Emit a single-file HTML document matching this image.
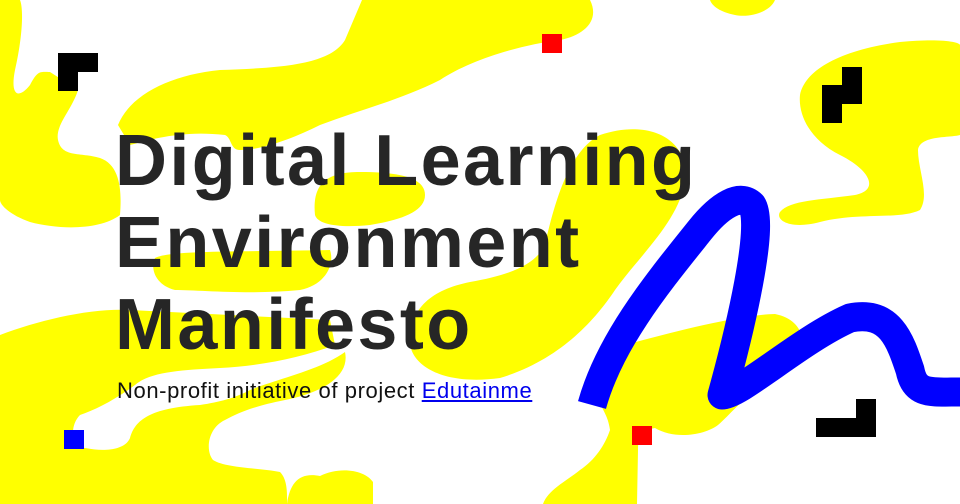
<!DOCTYPE html>
<html><head><style>
html,body{margin:0;padding:0;}
body{width:960px;height:504px;overflow:hidden;position:relative;background:#fff;font-family:"Liberation Sans",sans-serif;}
svg{position:absolute;left:0;top:0;}
h1{position:absolute;left:115px;top:120px;margin:0;font-size:72px;line-height:82px;font-weight:bold;color:#262626;letter-spacing:2.4px;}
p{position:absolute;left:117px;top:378px;margin:0;font-size:22px;color:#111;letter-spacing:0.6px;}
a{color:#0000ee;}
</style></head><body>
<svg width="960" height="504" viewBox="0 0 960 504">
<g fill="#ffff00">
<path d="M0 0 L20 0 C24 10 22 40 15 70 C10 95 18 100 30 85 C38 70 40 72 50 72 L78 90 C72 110 55 125 58 140 C62 158 80 152 100 158 C120 165 122 190 120 215 C100 230 60 230 30 222 C10 215 0 205 0 200 Z"/>
<path d="M118 125 C130 95 170 75 220 70 C280 68 330 65 345 40 L362 0 L590 0 C600 20 585 35 560 40 C520 45 470 60 440 80 C400 100 360 110 320 125 C290 140 260 150 240 150 C230 150 232 138 225 135 C180 130 150 140 130 145 Z"/>
<path d="M710 0 L775 0 C770 12 750 18 735 15 C720 12 712 6 710 0 Z"/>
<path d="M800 95 C805 70 840 50 900 42 C940 38 960 42 960 45 L960 100 C945 102 925 95 925 92 C935 85 960 80 960 80 L960 135 C950 138 920 135 918 150 C918 170 930 195 920 210 C900 220 860 212 820 222 C790 230 775 220 780 212 C790 200 820 200 855 195 C880 190 870 170 840 155 C810 140 798 115 800 95 Z"/>
<path d="M600 135 C650 118 690 140 685 180 C680 220 640 255 615 290 C595 320 560 360 500 378 C450 385 415 370 410 345 C408 310 430 290 470 282 C510 275 535 265 545 245 C555 200 570 150 600 135 Z"/>
<path d="M315 215 C312 185 325 172 360 172 C400 172 425 178 425 195 C425 212 400 220 370 225 C340 228 318 225 315 215 Z"/>
<path d="M155 258 C170 250 240 252 330 250 C335 265 325 285 300 290 C250 295 200 290 175 290 C155 285 150 268 155 258 Z"/>
<path d="M0 335 C40 320 90 308 130 310 L330 320 L335 345 C300 358 260 366 220 368 C180 370 150 372 135 385 C115 400 95 410 80 415 C70 425 70 445 85 448 C105 452 125 450 130 438 C135 420 150 408 200 405 C220 402 235 398 250 390 C280 378 320 370 345 352 C350 375 325 392 285 400 C255 406 240 412 225 420 C208 428 205 450 213 460 C225 468 260 468 280 472 C288 480 287 495 287 504 L0 504 Z"/>
<path d="M287 504 C290 482 300 472 320 476 C340 466 365 470 373 482 L373 504 Z"/>
<path d="M600 402 C595 370 605 350 625 345 C680 330 740 315 775 314 C795 318 805 332 800 345 C795 365 780 380 760 390 C740 400 730 415 718 425 C705 435 675 440 655 428 C640 430 638 440 638 450 L637 504 L543 504 C548 490 565 482 580 470 C595 460 605 445 610 430 C608 415 602 410 600 402 Z"/>
</g>
<path d="M592 405 C610 340 660 280 700 230 C720 205 740 193 752 205 C765 225 740 330 722 395 C740 395 800 340 850 318 C890 310 900 340 910 370 C915 395 930 392 960 392" fill="none" stroke="#0000ff" stroke-width="29" stroke-linecap="butt" stroke-linejoin="round"/>
<g fill="#000">
<rect x="58" y="53" width="40" height="19"/><rect x="58" y="72" width="20" height="19"/>
<rect x="842" y="67" width="20" height="37"/><rect x="822" y="85" width="20" height="38"/>
<rect x="856" y="399" width="20" height="20"/><rect x="816" y="418" width="60" height="19"/>
</g>
<rect x="542" y="34" width="20" height="19" fill="#ff0000"/>
<rect x="632" y="426" width="20" height="19" fill="#ff0000"/>
<rect x="64" y="430" width="20" height="19" fill="#0000ff"/>
</svg>
<h1>Digital Learning<br>Environment<br>Manifesto</h1>
<p>Non-profit initiative of project <a href="#">Edutainme</a></p>
</body></html>
